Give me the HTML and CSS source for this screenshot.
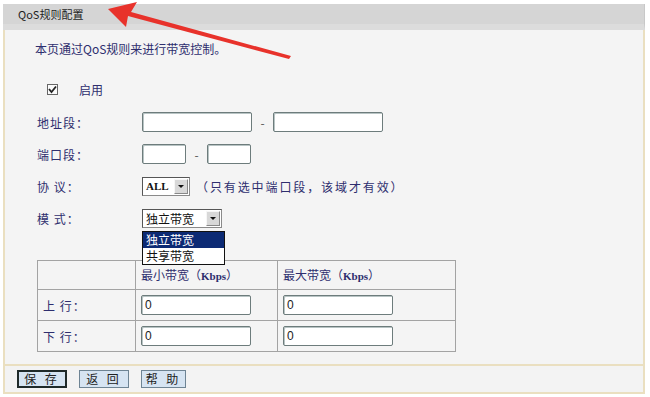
FILE: index.html
```html
<!DOCTYPE html>
<html lang="zh">
<head>
    <meta charset="UTF-8">
    <title>QoS规则配置</title>
    <link rel="stylesheet" href="styles.css">
</head>
<body>
    <div class="panel">
        <div class="panel-head">QoS规则配置</div>
        <div class="panel-body">
            <div class="row intro">本页通过QoS规则来进行带宽控制。</div>

            <div class="row enable">
                <span class="check"><svg width="9" height="9" viewBox="0 0 9 9"><path d="M1 4 L3.5 7 L8 1.5" fill="none" stroke="#222" stroke-width="1.8"/></svg></span>
                <span class="enable-text">启用</span>
            </div>

            <div class="row field">
                <span class="label">地址段：</span>
                <span class="input w-addr"></span>
                <span class="dash">-</span>
                <span class="input w-addr"></span>
            </div>
            <div class="row field">
                <span class="label">端口段：</span>
                <span class="input w-port"></span>
                <span class="dash">-</span>
                <span class="input w-port2"></span>
            </div>
            <div class="row field">
                <span class="label">协 议：</span>
                <span class="select sel-proto"><span class="sel-text latin">ALL</span><span class="sel-btn"></span></span>
                <span class="hint">（只有选中端口段，该域才有效）</span>
            </div>
            <div class="row field">
                <span class="label">模 式：</span>
                <span class="select sel-mode"><span class="sel-text">独立带宽</span><span class="sel-btn"></span>
                    <!-- 展开的下拉列表 -->
                    <span class="drop-list">
                        <span class="opt opt-on">独立带宽</span>
                        <span class="opt">共享带宽</span>
                    </span>
                </span>
            </div>

            <table class="bw-table">
                <tr class="tr-head">
                    <td class="c1"></td>
                    <td class="c2">最小带宽（<span class="latin">Kbps</span>）</td>
                    <td class="c3">最大带宽（<span class="latin">Kbps</span>）</td>
                </tr>
                <tr>
                    <td class="c1">上 行：</td>
                    <td class="c2"><span class="input cell-input">0</span></td>
                    <td class="c3"><span class="input cell-input">0</span></td>
                </tr>
                <tr>
                    <td class="c1">下 行：</td>
                    <td class="c2"><span class="input cell-input">0</span></td>
                    <td class="c3"><span class="input cell-input">0</span></td>
                </tr>
            </table>
        </div>
        <div class="panel-foot">
            <span class="btn btn-focus">保 存</span>
            <span class="btn">返 回</span>
            <span class="btn btn-small">帮 助</span>
        </div>
    </div>

    <!-- красная стрелка поверх -->
    <svg class="arrow" width="650" height="70" viewBox="0 0 650 70">
        <polygon points="108,9 137,2 131,12 291,56 289,59 128,16 126,27" fill="#e8322b"/>
    </svg>
</body>
</html>
```

FILE: styles.css
```css
body{
    margin: 0;
    background: #fff;
    font: 12px "Noto Sans CJK SC", "DejaVu Sans", sans-serif;
    color: #222;
    position: relative;
}
.panel{
    margin: 4px 5px 0 3px;
    width: 642px;
}
.panel-head{
    height: 20px;
    line-height: 20px;
    padding-left: 15px;
    background: #d5d5d5;
    border-bottom: 6px solid #dcdcdc;
    border-right: 1px solid #c8c8c8;
    font-size: 11px;
    color: #1e1e1e;
}
.panel-body{
    background: #f4f4f4;
    border-left: 2px solid #eadfc0;
    border-right: 2px solid #eadfc0;
    padding: 8px 0 12px 32px;
    height: 334px;
    box-sizing: border-box;
}
.row{
    display: flex;
    align-items: center;
    height: 20px;
}
.intro{
    color: #2e2e6e;
    margin-left: -2px;
}
.enable{
    margin-top: 21px;
    padding-left: 10px;
}
.check{
    width: 9px;
    height: 9px;
    border: 1px solid #666;
    background: #fafafa;
    display: flex;
}
.enable-text{
    margin-left: 21px;
    color: #2e2e6e;
}
.field{
    margin-top: 12px;
}
.enable + .field{
    margin-top: 13px;
}
.label{
    width: 105px;
    color: #2e2e6e;
    letter-spacing: 1px;
}
.input{
    display: inline-block;
    height: 20px;
    box-sizing: border-box;
    border: 1px solid #6d7c7c;
    box-shadow: inset 1px 1px 0 #b8c4c4;
    background: #fff;
    border-radius: 2px;
}
.w-addr{ width: 110px; }
.w-port{ width: 44px; }
.w-port2{ width: 44px; }
.dash{
    width: 21px;
    text-align: center;
    color: #555;
}
.select{
    position: relative;
    display: flex;
    align-items: center;
    height: 19px;
    box-sizing: border-box;
    border: 1px solid #8a8a8a;
    border-top-color: #555;
    border-left-color: #555;
    background: #fff;
}
.sel-proto{ width: 48px; }
.sel-mode{ width: 80px; }
.sel-text{
    flex: 1;
    padding-left: 3px;
    font-size: 12px;
    color: #111;
}
.latin{
    font-family: "Liberation Serif", serif;
    font-weight: bold;
    font-size: 11px;
}
.sel-btn{
    width: 14px;
    height: 15px;
    margin-right: 1px;
    background: #d8d8d8;
    border: 1px solid #f6f6f6;
    border-right-color: #888;
    border-bottom-color: #888;
    box-sizing: border-box;
    position: relative;
}
.sel-btn::after{
    content: "";
    position: absolute;
    left: 3px;
    top: 5px;
    border-left: 3px solid transparent;
    border-right: 3px solid transparent;
    border-top: 3px solid #111;
}
.hint{
    margin-left: 6px;
    color: #2e2e6e;
    font-size: 12px;
    letter-spacing: 1.9px;
}
.drop-list{
    position: absolute;
    left: -1px;
    top: 21px;
    width: 81px;
    border: 1px solid #111;
    background: #fff;
    z-index: 2;
    display: flex;
    flex-direction: column;
}
.opt{
    height: 16px;
    line-height: 16px;
    padding-left: 3px;
    color: #111;
}
.opt-on{
    background: #0c2a74;
    color: #fff;
}
.bw-table{
    margin-top: 32px;
    border-collapse: collapse;
    border: 1px solid #a3a3a3;
    color: #2e2e6e;
}
.bw-table td{
    border: 1px solid #a3a3a3;
    padding: 0 0 0 5px;
    height: 29px;
    box-sizing: border-box;
}
.tr-head td{
    height: 29px;
    vertical-align: top;
    padding-top: 5px;
}
.bw-table .c1{ width: 98px; letter-spacing: 1px; }
.bw-table .c2{ width: 142px; }
.bw-table .c3{ width: 178px; }
.bw-table tr + tr td{ height: 31px; }
.cell-input{
    width: 110px;
    line-height: 18px;
    padding-left: 3px;
    font-family: "Liberation Sans", sans-serif;
    font-size: 12px;
    color: #222;
    vertical-align: middle;
}
.panel-foot{
    background: #f3f3f3;
    border: 2px solid #eadfc0;
    display: flex;
    align-items: center;
    gap: 12px;
    padding-left: 12px;
    box-sizing: border-box;
    height: 30px;
}
.btn{
    width: 50px;
    height: 18px;
    box-sizing: border-box;
    border: 1px solid #6e8494;
    background: #d6e4f2;
    text-align: center;
    line-height: 16px;
    letter-spacing: 3px;
    color: #222;
    font-size: 12px;
}
.btn-focus{
    border: 2px solid #1f2a2a;
    line-height: 14px;
}
.btn-small{ width: 45px; }
.arrow{
    position: absolute;
    left: 0;
    top: 0;
    pointer-events: none;
}
```
